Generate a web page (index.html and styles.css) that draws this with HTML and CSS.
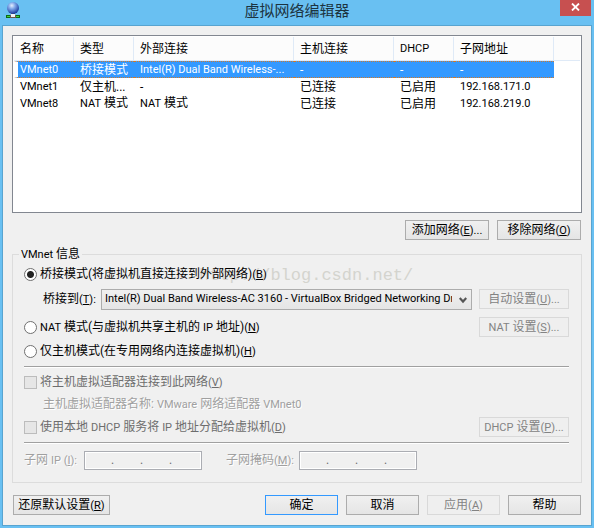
FILE: index.html
```html
<!DOCTYPE html>
<html lang="zh-CN">
<head>
<meta charset="utf-8">
<title>虚拟网络编辑器</title>
<link rel="stylesheet" href="styles.css">
</head>
<body>
<div class="window">
  <header class="titlebar">
    <svg class="app-icon" viewBox="0 0 16 18" width="16" height="18" aria-hidden="true">
      <defs>
        <radialGradient id="globe" cx="0.4" cy="0.3" r="0.7">
          <stop offset="0" stop-color="#e4efff"/>
          <stop offset="0.4" stop-color="#7fa6e8"/>
          <stop offset="1" stop-color="#18389c"/>
        </radialGradient>
      </defs>
      <rect x="6" y="11" width="4" height="4" fill="#6b5648"/>
      <circle cx="8" cy="6" r="6" fill="url(#globe)"/>
      <rect x="1" y="13" width="14" height="3" fill="#0d6a12"/>
      <rect x="2" y="14" width="12" height="1" fill="#3fd043"/>
      <rect x="5" y="13" width="6" height="3" fill="#6b5648"/>
      <rect x="6" y="12" width="4" height="3" fill="#f4f4f4"/>
    </svg>
    <h1 class="title">虚拟网络编辑器</h1>
    <button class="close" type="button" aria-label="关闭">
      <svg viewBox="0 0 9 8" width="9" height="8" aria-hidden="true"><path d="M1 0.5L8 7.5M8 0.5L1 7.5" stroke="#fff" stroke-width="1.8"/></svg>
    </button>
  </header>
  <main class="client">
    <div class="list">
      <table>
        <colgroup><col class="c-s"><col class="c-s"><col class="c-l"><col class="c-m"><col class="c-s"><col class="c-m"><col></colgroup>
        <thead>
          <tr><th>名称</th><th>类型</th><th>外部连接</th><th>主机连接</th><th class="en">DHCP</th><th>子网地址</th><td></td></tr>
        </thead>
        <tbody>
          <tr class="selected"><td class="en">VMnet0</td><td>桥接模式</td><td class="en">Intel(R) Dual Band Wireless-...</td><td>-</td><td>-</td><td>-</td><td></td></tr>
          <tr><td class="en">VMnet1</td><td>仅主机...</td><td>-</td><td>已连接</td><td>已启用</td><td class="en">192.168.171.0</td><td></td></tr>
          <tr><td class="en">VMnet8</td><td><span class="en">NAT</span> 模式</td><td><span class="en">NAT</span> 模式</td><td>已连接</td><td>已启用</td><td class="en">192.168.219.0</td><td></td></tr>
        </tbody>
      </table>
    </div>
    <div class="list-actions">
      <button class="btn" type="button">添加网络<span class="en">(<u>E</u>)...</span></button>
      <button class="btn" type="button">移除网络<span class="en">(<u>O</u>)</span></button>
    </div>
    <fieldset class="group">
      <legend><span class="en">VMnet</span> 信息</legend>
      <div class="watermark" aria-hidden="true">http://blog.csdn.net/</div>
      <div class="row first">
        <input type="radio" name="mode" id="bridge" checked>
        <label for="bridge">桥接模式(将虚拟机直接连接到外部网络)<span class="en">(<u>B</u>)</span></label>
      </div>
      <div class="row tall">
        <label class="bridge-label" for="adapter">桥接到<span class="en">(<u>T</u>):</span></label>
        <div class="select">
          <select id="adapter" class="en"><option>Intel(R) Dual Band Wireless-AC 3160 - VirtualBox Bridged Networking Driver</option></select>
          <svg viewBox="0 0 8 7" width="8" height="7" aria-hidden="true"><path d="M0.7 1L4 4.6L7.3 1" fill="none" stroke="#555" stroke-width="2.2"/></svg>
        </div>
        <button class="btn side" type="button" disabled>自动设置<span class="en">(<u>U</u>)...</span></button>
      </div>
      <div class="row tall">
        <input type="radio" name="mode" id="nat">
        <label for="nat"><span class="en">NAT</span> 模式(与虚拟机共享主机的 <span class="en">IP</span> 地址)<span class="en">(<u>N</u>)</span></label>
        <button class="btn side" type="button" disabled><span class="en">NAT</span> 设置<span class="en">(<u>S</u>)...</span></button>
      </div>
      <div class="row">
        <input type="radio" name="mode" id="host">
        <label for="host">仅主机模式(在专用网络内连接虚拟机)<span class="en">(<u>H</u>)</span></label>
      </div>
      <hr>
      <div class="row">
        <input type="checkbox" id="connect" disabled>
        <label class="dim" for="connect">将主机虚拟适配器连接到此网络<span class="en">(<u>V</u>)</span></label>
      </div>
      <p class="info etched">主机虚拟适配器名称: <span class="en">VMware</span> 网络适配器 <span class="en">VMnet0</span></p>
      <div class="row">
        <input type="checkbox" id="dhcp" disabled>
        <label class="dim" for="dhcp">使用本地 <span class="en">DHCP</span> 服务将 <span class="en">IP</span> 地址分配给虚拟机<span class="en">(<u>D</u>)</span></label>
        <button class="btn side" type="button" disabled><span class="en">DHCP</span> 设置<span class="en">(<u>P</u>)...</span></button>
      </div>
      <hr>
      <div class="row address">
        <label class="etched ip-label" for="ip1">子网 <span class="en">IP (<u>I</u>):</span></label>
        <div class="ip"><input id="ip1" disabled>.<input aria-label="IP 2" disabled>.<input aria-label="IP 3" disabled>.<input aria-label="IP 4" disabled></div>
        <label class="etched mask-label" for="mask1">子网掩码<span class="en">(<u>M</u>):</span></label>
        <div class="ip"><input id="mask1" disabled>.<input aria-label="掩码 2" disabled>.<input aria-label="掩码 3" disabled>.<input aria-label="掩码 4" disabled></div>
      </div>
    </fieldset>
    <footer class="footer">
      <button class="btn restore" type="button">还原默认设置<span class="en">(<u>R</u>)</span></button>
      <button class="btn default" type="button">确定</button>
      <button class="btn" type="button">取消</button>
      <button class="btn" type="button" disabled>应用<span class="en">(<u>A</u>)</span></button>
      <button class="btn" type="button">帮助</button>
    </footer>
  </main>
</div>
</body>
</html>
```
FILE: styles.css
```css
* {
  box-sizing: border-box;
}

body {
  margin: 0;
  background: #69c0f2;
  color: #000;
  font: 12px/16px Roboto, "Noto Sans CJK SC", sans-serif;
}

button,
input,
select {
  margin: 0;
  font: inherit;
  color: inherit;
}

.en {
  font-size: 11px;
}

.window {
  min-height: 100vh;
  display: flex;
  flex-direction: column;
  padding: 0 2px 2px;
  background: #69c0f2;
}

.titlebar {
  display: grid;
  grid-template-columns: 32px 1fr 32px;
  align-items: start;
  height: 25px;
}

.app-icon {
  margin: 2px 0 0 3px;
}

.title {
  margin: 0;
  text-align: center;
  font: 15px/20px "Noto Sans CJK SC", sans-serif;
  color: #1c333f;
}

.close {
  display: flex;
  align-items: center;
  justify-content: center;
  width: 31px;
  height: 16px;
  padding: 0 0 2px;
  border: 0;
  background: #c75050;
}

.client {
  flex: 1;
  display: flex;
  flex-direction: column;
  padding: 9px 9px 10px;
  border: 1px solid #58a4d0;
  background: #f0f0f0;
}

.list {
  height: 178px;
  border: 1px solid #828790;
  padding: 1px;
  background: #fff;
}

table {
  width: 100%;
  table-layout: fixed;
  border-collapse: separate;
  border-spacing: 0;
}

.c-s {
  width: 60px;
}

.c-m {
  width: 100px;
}

.c-l {
  width: 160px;
}

th,
td {
  height: 17px;
  padding: 0 0 0 6px;
  font-weight: normal;
  line-height: 16px;
  text-align: left;
  white-space: nowrap;
}

thead th,
thead td {
  height: 24px;
  border-bottom: 1px solid #dfeaf7;
  background: #fcfcfc;
}

thead th {
  border-right: 1px solid #dfeaf7;
}

.selected td {
  border: dotted #d0782a;
  border-width: 1px 0;
  background: #3399ff;
  line-height: 14px;
  color: #fff;
}

.selected td:first-child {
  padding-left: 2px;
  border-left: 4px solid #fff;
}

.selected td:last-child {
  border-color: transparent;
  background: none;
}

.list-actions {
  display: flex;
  justify-content: flex-end;
  gap: 8px;
  margin: 7px 1px 6px;
}

.btn {
  width: 84px;
  height: 20px;
  flex: none;
  padding: 0;
  border: 1px solid #acacac;
  background: linear-gradient(#f0f0f0, #e5e5e5);
  line-height: 16px;
  text-align: center;
  white-space: nowrap;
}

.btn:disabled {
  border-color: #d9d9d9;
  background: #efefef;
  color: #838383;
}

.group {
  position: relative;
  min-width: 0;
  margin: 0;
  padding: 0 12px 10px 11px;
  border: 1px solid #dcdcdc;
}

legend {
  margin-left: -5px;
  padding: 0 2px;
}

.row {
  display: flex;
  align-items: center;
  height: 20px;
  white-space: nowrap;
}

.row.first {
  height: 22px;
}

.row.tall {
  height: 28px;
}

.row.address {
  height: 24px;
}

.row label {
  position: relative;
}

.row input[type="radio"],
.row input[type="checkbox"] {
  appearance: none;
  flex: none;
  width: 13px;
  height: 13px;
  margin-right: 3px;
  border: 1px solid #707070;
  background: #fff;
}

.row input[type="radio"] {
  border-radius: 50%;
}

.row input[type="radio"]:checked {
  background: radial-gradient(circle, #222 3px, #fff 4px);
}

.row input[type="checkbox"] {
  border-color: #bcbcbc;
  background: #e6e6e6;
}

.row .side {
  width: 90px;
  margin-left: auto;
}

.bridge-label {
  width: 58px;
  margin-left: 19px;
}

.select {
  position: relative;
  flex: 1;
  min-width: 0;
  margin-right: 7px;
}

.select select {
  appearance: none;
  display: block;
  width: 100%;
  height: 21px;
  padding: 0 19px 0 3px;
  border: 1px solid #acacac;
  border-radius: 0;
  background: linear-gradient(#f0f0f0, #e5e5e5);
}

.select svg {
  position: absolute;
  right: 5px;
  top: 8px;
  pointer-events: none;
}

hr {
  height: 2px;
  margin: 5px 0 4px;
  border: solid;
  border-width: 1px 0;
  border-color: #a0a0a0 #fff #fff;
}

.dim {
  color: #6d6d6d;
}

.etched {
  color: #a0a0a0;
  text-shadow: 1px 1px #fff;
}

.info {
  margin: 0;
  padding-left: 19px;
  line-height: 24px;
}

.ip-label {
  width: 60px;
}

.mask-label {
  width: 73px;
  margin-left: 24px;
}

.ip {
  display: flex;
  align-items: center;
  width: 118px;
  height: 19px;
  padding-right: 3px;
  border: 1px solid #abadb3;
  box-shadow: inset 0 0 0 1px #fff;
  color: #6d6d6d;
}

.ip input {
  width: 25px;
  min-width: 0;
  flex: 1;
  height: 13px;
  margin-left: 2px;
  padding: 0;
  border: 0;
  background: #f0f0f0;
}

.watermark {
  position: absolute;
  left: 186px;
  top: 3px;
  font: 17px/20px "Liberation Mono", monospace;
  color: #d4d4ce;
  pointer-events: none;
}

.footer {
  display: flex;
  gap: 8px;
  margin: auto 1px 0;
}

.footer .btn {
  width: 73px;
}

.footer .restore {
  width: 97px;
  margin-right: auto;
}

.footer .default {
  border-color: #3399ff;
}
```
